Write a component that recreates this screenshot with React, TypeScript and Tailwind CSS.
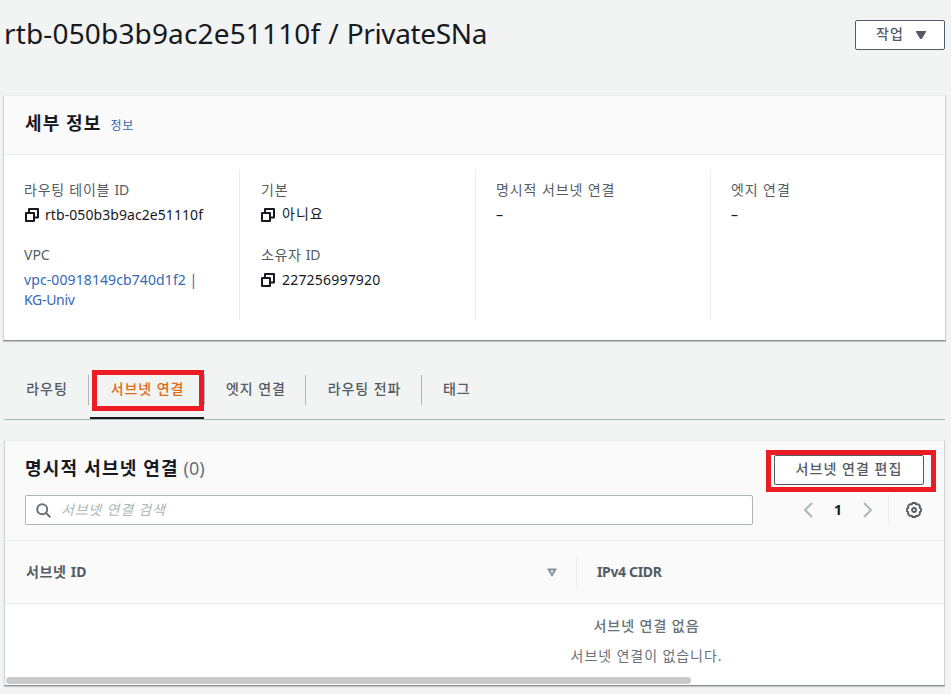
import React from "react";

const CopyIcon = () => (
  <svg width="14" height="14" viewBox="0 0 14 14" fill="none" stroke="#16191f" strokeWidth="2" className="shrink-0">
    <path d="M1 5h8v8H1z" strokeLinejoin="round" />
    <path d="M4 4V1h9v8.5h-3" strokeLinejoin="round" />
  </svg>
);

const GearIcon = () => (
  <svg width="16" height="16" viewBox="0 0 16 16" fill="none" stroke="#545b64" strokeWidth="1.8">
    <path d="M6.5 1h3l.6 1.3 2-.2 1.8 1.8-.2 2 1.3.6v3l-1.3.6.2 2-1.8 1.8-2-.2L9.500 15h-3l-.6-1.300-2 .2-1.800-1.800.2-2L1 9.500v-3l1.300-.6-.2-2 1.800-1.800 2 .2z" strokeLinejoin="round" />
    <circle cx="8" cy="8" r="2" />
  </svg>
);

const Label = ({ children }: { children: React.ReactNode }) => (
  <div className="h-5 whitespace-nowrap text-[#545b64]">{children}</div>
);

const Copyable = ({ children }: { children: React.ReactNode }) => (
  <div className="mt-[5px] flex h-5 items-center gap-[6px] pl-px whitespace-nowrap">
    <CopyIcon />
    {children}
  </div>
);

const Details = () => (
  <section className="ml-[3px] h-[246px] w-[943px] border border-x-[#d0d4d4] border-t-[#eaeded] border-b-[#879196] bg-white shadow-[0_1px_1px_rgba(0,28,36,0.2)]">
    <header className="flex h-[59px] items-center border-b border-[#eaeded] bg-[#fafafa] pb-[4px] pl-[21px]">
      <h2 className="text-[18px] font-bold tracking-[1.1px]">세부 정보</h2>
      <a className="mt-[5px] ml-[9px] text-[12px] tracking-[0.8px] text-[#3368b5]">정보</a>
    </header>
    <div className="mt-[15px] grid h-[150px] grid-cols-[236px_236px_235px_234px]">
      <div className="border-r border-[#eaeded] pt-[10px] pl-5">
        <Label>
          <span className="tracking-[0.75px]">라우팅 테이블 </span>
          <span className="tracking-[-0.2px]">ID</span>
        </Label>
        <Copyable>
          <span className="tracking-[0.07px]">rtb-050b3b9ac2e51110f</span>
        </Copyable>
        <div className="mt-5">
          <Label>VPC</Label>
        </div>
        <a className="mt-[5px] block leading-5 text-[#3368b5]">
          <span className="tracking-[0.1px]">vpc-00918149cb740d1f2</span> |<br />
          <span className="tracking-[-0.3px]">KG-Univ</span>
        </a>
      </div>
      <div className="border-r border-[#eaeded] pt-[10px] pl-[21px]">
        <Label>
          <span className="tracking-[0.8px]">기본</span>
        </Label>
        <div className="-ml-px">
          <Copyable>
            <span className="-mt-[2px] ml-px tracking-[1px]">아니요</span>
          </Copyable>
        </div>
        <div className="mt-5">
          <Label>
            <span className="tracking-[0.6px]">소유자 </span>
            <span className="tracking-[-0.3px]">ID</span>
          </Label>
        </div>
        <div className="-ml-px">
          <Copyable>
            <span className="ml-px tracking-[0.2px]">227256997920</span>
          </Copyable>
        </div>
      </div>
      <div className="border-r border-[#eaeded] pt-[10px] pl-5">
        <Label>
          <span className="tracking-[0.9px]">명시적 서브넷 연결</span>
        </Label>
        <div className="mt-[5px] h-5">–</div>
      </div>
      <div className="pt-[10px] pl-5">
        <Label>
          <span className="tracking-[0.9px]">엣지 연결</span>
        </Label>
        <div className="mt-[5px] h-5">–</div>
      </div>
    </div>
  </section>
);

const Tab = ({ label, width }: { label: string; width: string }) => (
  <div className={`mt-[5px] flex h-[30px] items-center justify-center border-r border-[#aab7b8] pb-[2px] whitespace-nowrap ${width}`}>
    {label}
  </div>
);

const Tabs = () => (
  <nav className="mt-[29px] ml-1 flex h-[50px] w-[941px] border-b border-[#aab7b8] font-medium tracking-[0.95px] text-[#545b64]">
    <Tab label="라우팅" width="w-[85px] pl-[2px]" />
    <div className="ml-px flex h-[49px] w-[114px] flex-col items-end justify-between border-b-2 border-[#16191f]">
      <div className="flex h-[41px] w-[112px] items-center justify-center border-5 border-[#ed1c24] pr-px pb-[3px] whitespace-nowrap text-[#dd6b10]">
        서브넷 연결
      </div>
    </div>
    <div className="mt-[5px] h-[30px] w-px bg-[#aab7b8]" />
    <Tab label="엣지 연결" width="w-[101px] pl-[2px]" />
    <Tab label="라우팅 전파" width="w-[116px] pl-[2px]" />
    <div className="mt-[5px] flex h-[30px] items-center pb-[2px] pl-[21px]">태그</div>
  </nav>
);

const Subnets = () => (
  <section className="mt-5 ml-1 h-[246px] w-[941px] border border-x-[#d0d4d4] border-t-[#eaeded] border-b-[#879196] bg-white shadow-[0_1px_1px_rgba(0,28,36,0.2)]">
    <header className="h-[100px] border-b border-[#eaeded] bg-[#fafafa] pt-[9px] pl-5">
      <div className="flex h-[42px] items-start justify-between pr-[8px]">
        <h2 className="mt-[5px] text-[18px] leading-[27px] font-bold">
          <span className="tracking-[1.2px]">명시적 서브넷 연결</span>{" "}
          <span className="font-normal text-[#687078]">(0)</span>
        </h2>
        <div className="h-[42px] w-[170px] border-5 border-[#ed1c24] pl-[3px]">
          <button className="flex h-[30px] w-[150px] items-center justify-center rounded-[2px] border border-[#545b64] bg-white pb-[2px] font-medium tracking-[1.05px] text-[#545b64]">
            서브넷 연결 편집
          </button>
        </div>
      </div>
      <div className="mt-[3px] flex h-[30px] items-center">
        <div className="flex h-[30px] w-[728px] items-center rounded-[2px] border border-[#aab7b8] bg-white pl-[10px] text-[#aab7b8] italic">
          <svg width="15" height="15" viewBox="0 0 15 15" fill="none" stroke="#687078" strokeWidth="2">
            <circle cx="6.2" cy="6.2" r="5" />
            <path d="m9.9 9.9 4.4 4.4" />
          </svg>
          <span className="ml-[10px] tracking-[0.8px]">서브넷 연결 검색</span>
        </div>
        <svg className="ml-[49px]" width="12" height="16" viewBox="0 0 12 16" fill="none" stroke="#aab7b8" strokeWidth="2">
          <path d="M10 1 3 8l7 7" />
        </svg>
        <span className="ml-[19px] w-[10px] text-center text-[14px] font-bold">1</span>
        <svg className="ml-[19px]" width="12" height="16" viewBox="0 0 12 16" fill="none" stroke="#aab7b8" strokeWidth="2">
          <path d="m2 1 7 7-7 7" />
        </svg>
        <div className="ml-[14px] h-[30px] w-px bg-[#eaeded]" />
        <div className="ml-[17px]">
          <GearIcon />
        </div>
      </div>
    </header>
    <div className="flex h-[63px] items-center border-b border-[#eaeded] bg-[#fafafa] font-bold text-[#545b64]">
      <div className="flex h-[31px] w-[572px] items-center justify-between border-r border-[#eaeded] pr-[19px] pl-[21px]">
        <span>
          <span className="tracking-[0.6px]">서브넷 </span>ID
        </span>
        <svg width="10" height="9" viewBox="0 0 10 9" fill="none" stroke="#879596" strokeWidth="2">
          <path d="M1.6 1.500h6.800L5 7z" />
        </svg>
      </div>
      <div className="pl-5 tracking-[-0.35px]">IPv4 CIDR</div>
    </div>
    <div className="h-[73px] w-[1283px] max-w-none overflow-hidden pt-[12px] text-center text-[#687078]">
      <div className="leading-5 font-medium tracking-[0.95px]">서브넷 연결 없음</div>
      <div className="mt-[10px] leading-5 tracking-[0.92px]">서브넷 연결이 없습니다.</div>
    </div>
    <div className="ml-px h-[7px] w-[685px] rounded-full bg-[#c9c9c9]" />
  </section>
);

export default function App() {
  return (
    <main className="h-[694px] w-[951px] overflow-hidden bg-[#f2f4f3] font-['Noto_Sans','Noto_Sans_CJK_KR',sans-serif] text-[14px] leading-5 text-[#16191f]">
      <header className="flex h-[95px] items-start justify-between pt-5 pr-[6px] pl-[4px]">
        <h1 className="-mt-[2px] text-[28px] leading-[30px] whitespace-nowrap">
          <span className="tracking-[0.15px]">rtb-050b3b9ac2e51110f</span>
          <span className="mx-[8px]">/</span>
          <span className="tracking-[-0.35px]">PrivateSNa</span>
        </h1>
        <button className="flex h-[30px] w-[90px] items-center rounded-[2px] border border-[#545b64] bg-white pb-[2px] pl-5 font-medium tracking-[1px] text-[#545b64]">
          작업
          <svg className="mt-[2px] ml-[12px]" width="10" height="8" viewBox="0 0 10 8" fill="#545b64">
            <path d="M0 0h10v1L5.8 8H4.2L0 1z" />
          </svg>
        </button>
      </header>
      <Details />
      <Tabs />
      <Subnets />
    </main>
  );
}
